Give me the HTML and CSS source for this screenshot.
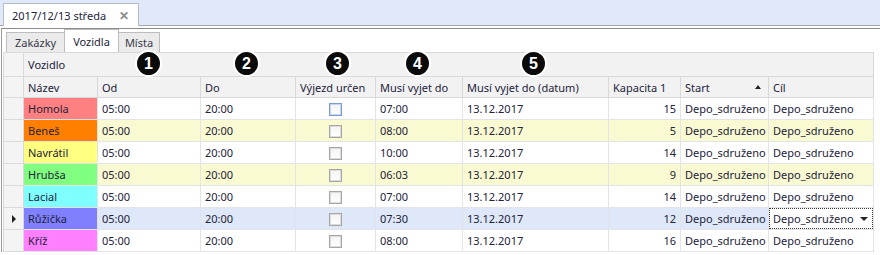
FILE: index.html
```html
<!DOCTYPE html>
<html lang="cs">
<head>
    <meta charset="UTF-8">
    <title>Vozidla</title>
    <link rel="stylesheet" href="styles.css">
</head>
<body>
    <div class="doc-strip">
        <div class="doc-tab">
            <span>2017/12/13 středa</span>
            <span class="doc-close">✕</span>
        </div>
    </div>

    <div class="page">
        <div class="panel">
            <div class="tabs">
                <div class="tab">Zakázky</div>
                <div class="tab active">Vozidla</div>
                <div class="tab">Místa</div>
            </div>

            <div class="grid-wrap">
                <table class="grid">
                    <colgroup>
                        <col style="width:20px">
                        <col style="width:74px">
                        <col style="width:103px">
                        <col style="width:95px">
                        <col style="width:80px">
                        <col style="width:87px">
                        <col style="width:146px">
                        <col style="width:72px">
                        <col style="width:88px">
                        <col style="width:105px">
                    </colgroup>
                    <thead>
                        <tr class="band">
                            <th class="ind"></th>
                            <th colspan="9">Vozidlo</th>
                        </tr>
                        <tr class="head">
                            <th class="ind"></th>
                            <th>Název</th>
                            <th>Od</th>
                            <th>Do</th>
                            <th>Výjezd určen</th>
                            <th>Musí vyjet do</th>
                            <th>Musí vyjet do (datum)</th>
                            <th>Kapacita 1</th>
                            <th class="sorted">Start <span class="sort-up"></span></th>
                            <th>Cíl</th>
                        </tr>
                    </thead>
                    <tbody>
                        <!-- rows are filled in below -->
                    </tbody>
                </table>

                <span class="badge b1">1</span>
                <span class="badge b2">2</span>
                <span class="badge b3">3</span>
                <span class="badge b4">4</span>
                <span class="badge b5">5</span>
            </div>
        </div>
    </div>

    <script>
        const vehicles = [
            { name: 'Homola',   color: '#ff8080', from: '05:00', to: '20:00', leave: '07:00', cap: 15 },
            { name: 'Beneš',    color: '#ff8000', from: '05:00', to: '20:00', leave: '08:00', cap: 5 },
            { name: 'Navrátil', color: '#ffff80', from: '05:00', to: '20:00', leave: '10:00', cap: 14 },
            { name: 'Hrubša',   color: '#80ff80', from: '05:00', to: '20:00', leave: '06:03', cap: 9 },
            { name: 'Lacial',   color: '#80ffff', from: '05:00', to: '20:00', leave: '07:00', cap: 14 },
            { name: 'Růžička',  color: '#8080ff', from: '05:00', to: '20:00', leave: '07:30', cap: 12 },
            { name: 'Kříž',     color: '#ff80ff', from: '05:00', to: '20:00', leave: '08:00', cap: 16 }
        ];
        const current = 5;

        const tbody = document.querySelector('.grid tbody');
        vehicles.forEach((v, i) => {
            const tr = document.createElement('tr');
            tr.className = i === current ? 'row selected' : (i % 2 ? 'row alt' : 'row');
            tr.innerHTML =
                '<td class="ind">' + (i === current ? '<span class="row-mark"></span>' : '') + '</td>' +
                '<td style="background:' + v.color + '">' + v.name + '</td>' +
                '<td>' + v.from + '</td>' +
                '<td>' + v.to + '</td>' +
                '<td class="check-cell"><span class="check' + (i === 0 ? ' hot' : '') + '"></span></td>' +
                '<td>' + v.leave + '</td>' +
                '<td>13.12.2017</td>' +
                '<td class="num">' + v.cap + '</td>' +
                '<td>Depo_sdruženo</td>' +
                (i === current
                    ? '<td class="editing"><div class="editor">Depo_sdruženo<span class="drop"></span></div></td>'
                    : '<td>Depo_sdruženo</td>');
            tbody.appendChild(tr);
        });
    </script>
</body>
</html>
```

FILE: styles.css
```css
body {
    margin: 0;
    font-family: "Noto Sans", sans-serif;
    font-size: 11px;
    color: #23233a;
    background: #fff;
}

/* document tab strip */
.doc-strip {
    display: flex;
    align-items: flex-end;
    height: 25px;
    padding-left: 3px;
    background: #dfe9f9;
    border-bottom: 1px solid #a4a8ae;
}
.doc-tab {
    display: flex;
    align-items: center;
    gap: 13px;
    height: 22px;
    margin-bottom: -1px;
    padding: 0 9px 0 8px;
    background: #fff;
    border: 1px solid #b7bcc4;
    border-bottom: none;
    font-size: 11px;
}
.doc-close {
    color: #8a8a8a;
    font-size: 12px;
    font-weight: bold;
}

.page {
    padding-top: 2px;
}
.panel {
    margin-left: 1px;
    padding-left: 1px;
    border-top: 1px solid #8c8c8c;
    border-left: 1px solid #9a9a9a;
}

/* inner tabs */
.tabs {
    display: flex;
    align-items: flex-end;
    height: 23px;
    padding-left: 3px;
}
.tab {
    display: flex;
    align-items: center;
    height: 19px;
    padding: 0 8px;
    background: #ebebeb;
    border: 1px solid #bdbdbd;
    border-bottom: none;
    color: #3a3a4a;
}
.tab + .tab {
    margin-left: -1px;
}
.tab:last-child {
    padding: 0 6px;
}
.tab.active {
    height: 22px;
    background: #fff;
    color: #23233a;
    padding: 0 8px;
}

/* grid */
.grid-wrap {
    position: relative;
    width: 871px;
}
.grid {
    width: 871px;
    table-layout: fixed;
    border-collapse: collapse;
    border: 1px solid #a9a9a9;
}
.grid th,
.grid td {
    padding: 0 4px;
    text-align: left;
    font-weight: normal;
    white-space: nowrap;
    overflow: hidden;
}
.grid th {
    background: #f2f2f2;
    border: 1px solid #d8d8d8;
}
.band th {
    height: 23px;
}
.head th {
    height: 20px;
}
.grid td {
    height: 21px;
    border: 1px solid #e2e4e8;
}
.grid .ind {
    background: #f4f4f4;
    border-color: #dadada;
    padding: 0;
    position: relative;
}
.row.alt td {
    background: #fafad2;
}
.row.selected td {
    background: #dee8f8;
}
.row td.ind {
    background: #f4f4f4;
}
.grid td.num {
    text-align: right;
}
.check-cell {
    text-align: center !important;
}
.check {
    display: inline-block;
    width: 11px;
    height: 11px;
    vertical-align: middle;
    border: 1px solid #a6a6a6;
    box-shadow: inset 0 0 0 1px #dcdcdc;
    background: linear-gradient(#f3f3f3, #ffffff);
}
.check.hot {
    border-color: #7b9bd4;
    box-shadow: inset 0 0 0 1px #c6d6f2;
}

.sorted {
    position: relative;
}
.sort-up {
    position: absolute;
    right: 7px;
    top: 8px;
    border-left: 3px solid transparent;
    border-right: 3px solid transparent;
    border-bottom: 4px solid #222;
}

.row-mark {
    position: absolute;
    left: 8px;
    top: 7px;
    border-top: 4px solid transparent;
    border-bottom: 4px solid transparent;
    border-left: 4px solid #222;
}

.grid td.editing {
    padding: 0;
    background: #fff !important;
}
.editor {
    position: relative;
    height: 19px;
    line-height: 19px;
    padding-left: 3px;
    border: 1px dotted #333;
}
.drop {
    position: absolute;
    right: 4px;
    top: 8px;
    border-left: 4px solid transparent;
    border-right: 4px solid transparent;
    border-top: 4px solid #222;
}

/* numbered callouts */
.badge {
    position: absolute;
    top: -2px;
    width: 23px;
    height: 23px;
    border: 2px solid #fff;
    border-radius: 50%;
    background: #0b0b0b;
    color: #fff;
    font-family: "Liberation Sans", Arial, sans-serif;
    font-size: 16px;
    font-weight: bold;
    line-height: 23px;
    text-align: center;
}
.b1 { left: 132px; }
.b2 { left: 230px; }
.b3 { left: 321px; }
.b4 { left: 401px; }
.b5 { left: 517px; }
```
